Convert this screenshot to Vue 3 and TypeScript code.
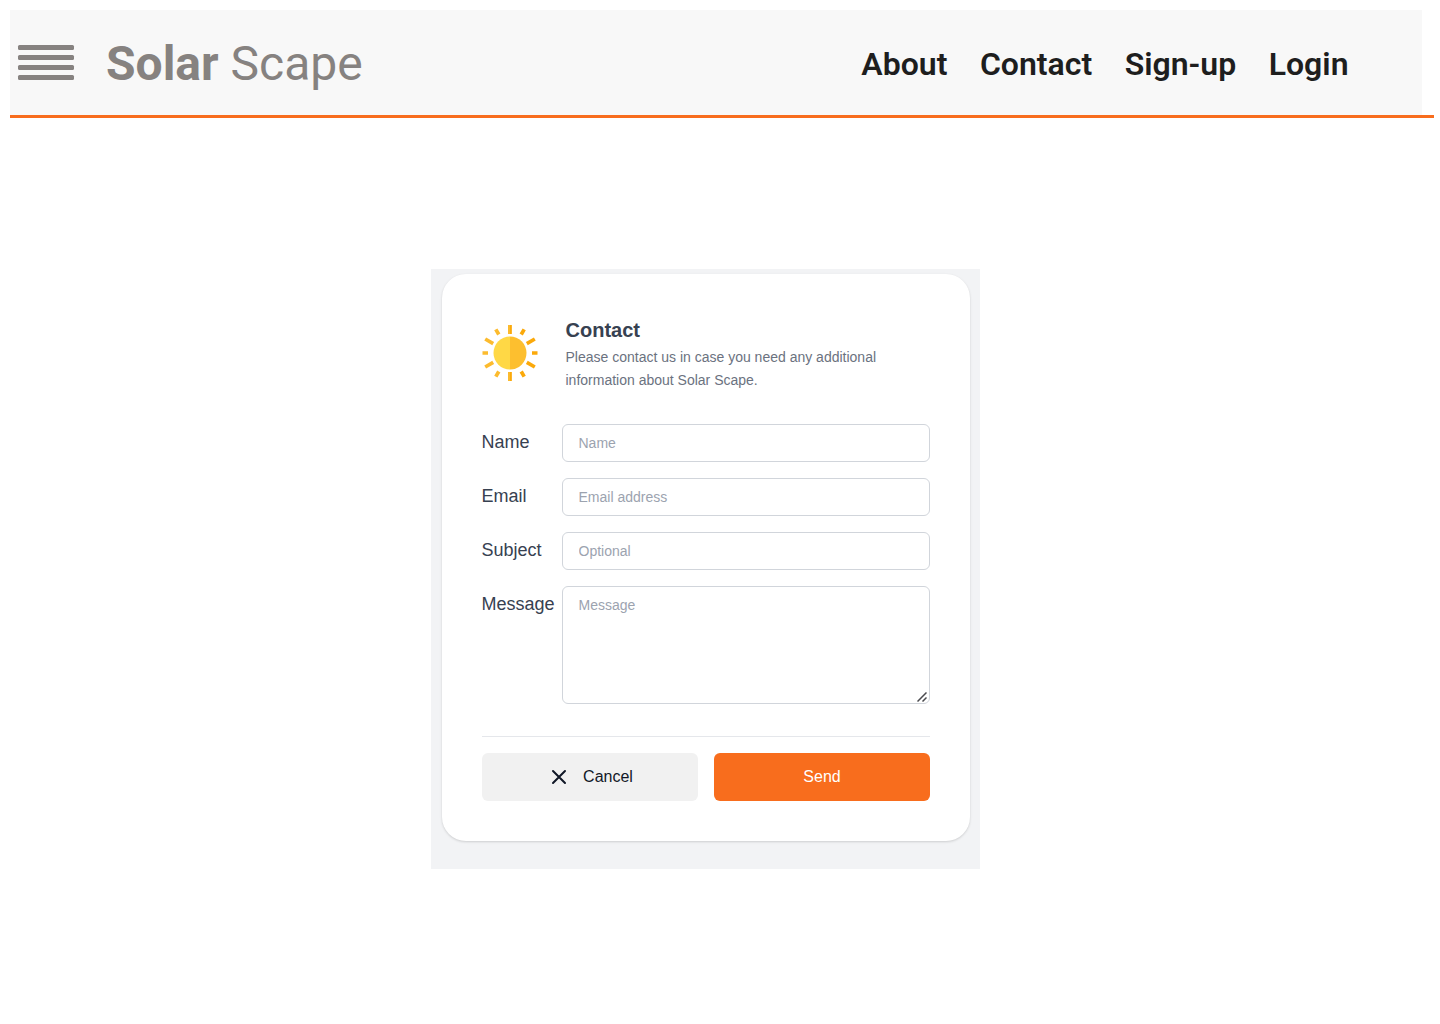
<script setup lang="ts">
interface Field {
  id: string
  label: string
  placeholder: string
  type: string
}

const links: string[] = ['About', 'Contact', 'Sign-up', 'Login']

const fields: Field[] = [
  { id: 'name', label: 'Name', placeholder: 'Name', type: 'text' },
  { id: 'email', label: 'Email', placeholder: 'Email address', type: 'email' },
  { id: 'subject', label: 'Subject', placeholder: 'Optional', type: 'text' },
]
</script>

<template>
  <div class="page">
    <header class="header">
      <div class="bar">
        <button class="menu" aria-label="Menu">
          <span v-for="n in 4" :key="n"></span>
        </button>
        <div class="brand"><b>Solar</b> Scape</div>
        <nav class="nav">
          <a v-for="link in links" :key="link">{{ link }}</a>
        </nav>
      </div>
    </header>

    <main class="panel">
      <form class="card" @submit.prevent>
        <div class="intro">
          <svg class="sun" viewBox="0 0 56 56" width="56" height="56">
            <g stroke="#fcbb2e" stroke-width="3.7">
              <path d="M0.5 28H6M3.2 14l8 4.6M3.2 42l8-4.6M13.8 4.4l3 5.1M13.8 51.6l3-5.1" />
            </g>
            <g stroke="#fba90a" stroke-width="3.7">
              <path d="M55.5 28H50M52.8 14l-8 4.6M52.8 42l-8-4.6M42.2 4.4l-3 5.1M42.2 51.6l-3-5.1" />
              <path d="M28 0v9M28 47v9" />
            </g>
            <path d="M27.1 0v9M27.1 47v9" stroke="#fcbb2e" stroke-width="1.9" />
            <path d="M28 11.5a16.5 16.5 0 0 0 0 33z" fill="#ffd845" />
            <path d="M28 11.5a16.5 16.5 0 0 1 0 33z" fill="#fdbf2f" />
          </svg>
          <div class="copy">
            <h1>Contact</h1>
            <p>Please contact us in case you need any additional information about Solar Scape.</p>
          </div>
        </div>

        <div class="fields">
          <div v-for="field in fields" :key="field.id" class="row">
            <label :for="field.id">{{ field.label }}</label>
            <input :id="field.id" :type="field.type" :placeholder="field.placeholder" />
          </div>
          <div class="row">
            <label for="message">Message</label>
            <textarea id="message" placeholder="Message"></textarea>
            <svg class="grip" viewBox="0 0 10 10" width="10" height="10">
              <path d="M0.5 9.5l9-9M5.5 9.5l4-4" fill="none" stroke="#4a4a4e" stroke-width="1.5" />
            </svg>
          </div>
        </div>

        <div class="actions">
          <button type="button" class="cancel">
            <svg viewBox="0 0 24 24" width="24" height="24">
              <path d="M6 18L18 6M6 6l12 12" fill="none" stroke="#111827" stroke-width="2" stroke-linecap="round" />
            </svg>
            Cancel
          </button>
          <button type="submit" class="send">Send</button>
        </div>
      </form>
    </main>
  </div>
</template>

<style>
body {
  background: #fff;
}
</style>

<style scoped>
* {
  box-sizing: border-box;
}

.page {
  height: 1024px;
  overflow: hidden;
  padding-top: 10px;
  font-family: "Liberation Sans", Arial, sans-serif;
}

.header {
  width: 1424px;
  margin-left: 10px;
  border-bottom: 3px solid #f86d1d;
}

.bar {
  display: flex;
  align-items: center;
  width: 1412px;
  height: 105px;
  padding: 0 73.5px 0 8px;
  background: #f8f8f8;
  font-family: Roboto, sans-serif;
}

.menu {
  display: flex;
  flex-direction: column;
  gap: 5px;
  width: 56px;
  padding: 0;
  border: 0;
  background: none;
}

.menu span {
  height: 5px;
  border-radius: 1.5px;
  background: #868280;
}

.brand {
  margin-left: 32px;
  padding-top: 2px;
  color: #868280;
  font-size: 48px;
  line-height: 56px;
  white-space: nowrap;
}

.brand b {
  font-weight: 700;
}

.nav {
  display: flex;
  gap: 32.5px;
  margin-left: auto;
  padding-top: 3px;
  color: #1e1e1e;
  font-size: 32px;
  font-weight: 600;
  line-height: 38px;
}

.panel {
  width: 549px;
  height: 600px;
  margin: 151px 0 0 431px;
  padding: 5px 10px 0 11px;
  background: #f2f3f5;
}

.card {
  height: 567px;
  padding: 40px;
  border-radius: 24px;
  background: #fff;
  box-shadow: 0 1px 3px rgba(0, 0, 0, 0.1), 0 1px 2px rgba(0, 0, 0, 0.06);
}

.intro {
  display: flex;
  align-items: center;
  height: 78px;
}

.sun {
  flex: none;
}

.copy {
  margin-left: 27.5px;
}

h1 {
  margin: 0;
  color: #374151;
  font-size: 20px;
  font-weight: 700;
  line-height: 32px;
}

p {
  width: 340px;
  margin: 0;
  color: #6b7280;
  font-size: 14px;
  line-height: 23px;
}

.fields {
  display: flex;
  flex-direction: column;
  gap: 16px;
  margin-top: 32px;
}

.row {
  position: relative;
  display: flex;
}

label {
  width: 80.5px;
  margin-left: -0.5px;
  color: #374151;
  font-size: 18px;
  line-height: 36px;
}

input,
textarea {
  flex: 1;
  height: 38px;
  margin: 0;
  padding: 8px 15.5px;
  border: 1px solid #d1d5db;
  border-radius: 6px;
  outline: 0;
  background: #fff;
  font-family: inherit;
  font-size: 14px;
  line-height: 20px;
}

textarea {
  height: 118px;
  resize: none;
}

.grip {
  position: absolute;
  right: 3px;
  bottom: 2px;
}

input::placeholder,
textarea::placeholder {
  color: #9ca3af;
}

.actions {
  display: flex;
  gap: 16px;
  margin-top: 32px;
  padding-top: 16px;
  border-top: 1px solid #e5e7eb;
}

.actions button {
  display: flex;
  flex: 1;
  align-items: center;
  justify-content: center;
  height: 48px;
  padding: 0 12px;
  border: 0;
  border-radius: 6px;
  font-family: inherit;
  font-size: 16px;
}

.actions .cancel {
  gap: 12px;
  background: #f1f1f1;
  color: #111827;
}

.actions .send {
  background: #f86d1d;
  color: #fff;
}
</style>
